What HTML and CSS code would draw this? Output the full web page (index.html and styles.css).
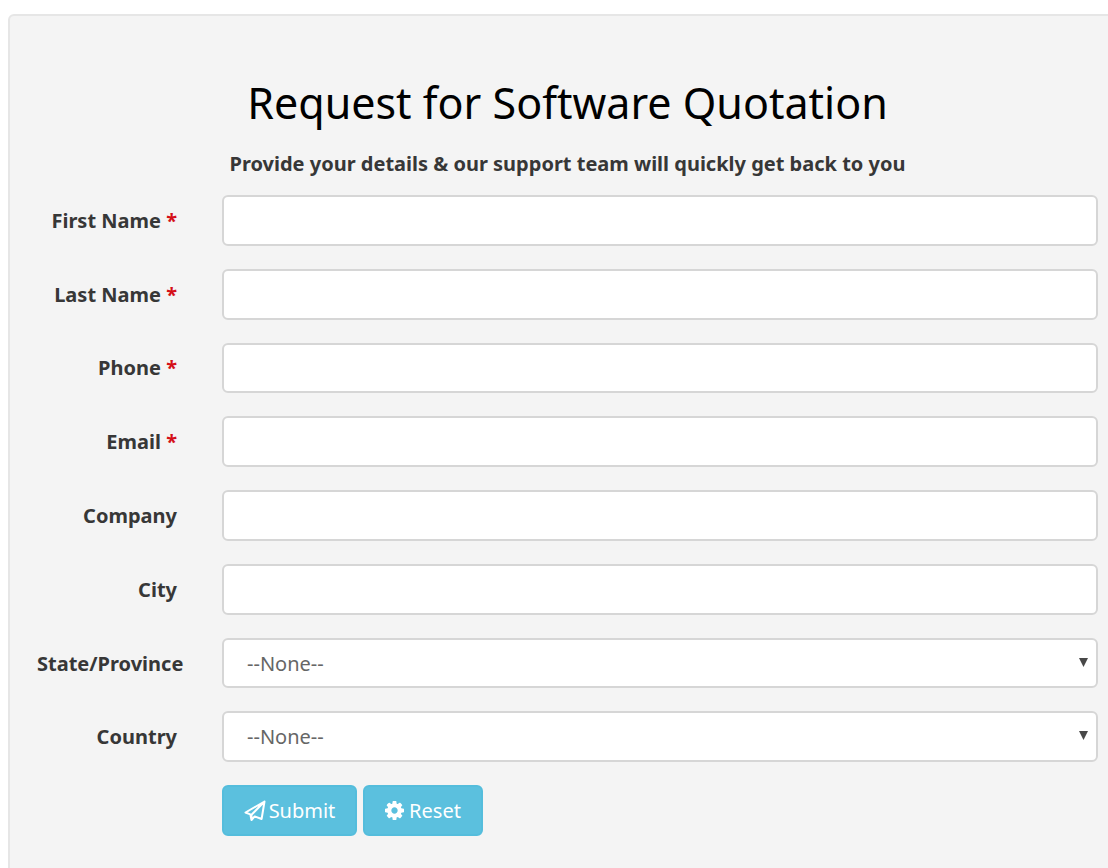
FILE: index.html
```html
<!DOCTYPE html>
<html lang="en">
<head>
<meta charset="utf-8">
<title>Request for Software Quotation</title>
<link rel="stylesheet" href="styles.css">
</head>
<body>
<main class="panel">
  <header class="intro">
    <h1 class="title">Request for Software Quotation</h1>
    <p class="subtitle">Provide your details &amp; our support team will quickly get back to you</p>
  </header>
  <form class="form">
    <div class="row"><label class="label" for="first">First Name <span class="required">*</span></label><input class="field" id="first" type="text" required></div>
    <div class="row"><label class="label" for="last">Last Name <span class="required">*</span></label><input class="field" id="last" type="text" required></div>
    <div class="row"><label class="label" for="phone">Phone <span class="required">*</span></label><input class="field" id="phone" type="tel" required></div>
    <div class="row"><label class="label" for="email">Email <span class="required">*</span></label><input class="field" id="email" type="email" required></div>
    <div class="row"><label class="label" for="company">Company</label><input class="field" id="company" type="text"></div>
    <div class="row"><label class="label" for="city">City</label><input class="field" id="city" type="text"></div>
    <div class="row"><label class="label" for="state">State/Province</label>
      <div class="select"><select class="field" id="state"><option>--None--</option></select><svg class="arrow" viewBox="0 0 9 9" aria-hidden="true"><path d="M0 0H9L4.500 9Z"/></svg></div></div>
    <div class="row"><label class="label" for="country">Country</label>
      <div class="select"><select class="field" id="country"><option>--None--</option></select><svg class="arrow" viewBox="0 0 9 9" aria-hidden="true"><path d="M0 0H9L4.500 9Z"/></svg></div></div>
    <div class="row actions">
      <button class="button submit" type="submit"><svg class="plane" viewBox="0 0 22 22" aria-hidden="true"><path d="M20.500 1.500L1.500 12.500L6.300 14.400L7.500 20L10.700 16.400L17.600 19L20.500 1.500L7.500 14.800V20"/></svg>Submit</button>
      <button class="button reset" type="reset"><svg class="gear" viewBox="0 0 1536 1536" aria-hidden="true"><path d="M1024 768q0-106-75-181t-181-75-181 75-75 181 75 181 181 75 181-75 75-181zm512-109v222q0 12-8 23t-20 13l-185 28q-19 54-39 91 35 50 107 138 10 12 10 25t-9 23q-27 37-99 108t-94 71q-12 0-26-9l-138-108q-44 23-91 38-16 136-29 186-7 28-36 28H657q-14 0-24.500-8.500T621 1506l-28-184q-49-16-90-37l-141 107q-10 9-25 9-14 0-25-11-126-114-165-168-7-10-7-23 0-12 8-23 15-21 51-66.500t54-70.500q-27-50-41-99L29 913q-13-2-21-12.500T0 877V655q0-12 8-23t19-13l186-28q14-46 39-92-40-57-107-138-10-12-10-24 0-10 9-23 26-36 98.500-107.500T337 135q13 0 26 10l138 107q44-23 91-38 16-136 29-186 7-28 36-28h222q14 0 24.500 8.500T915 30l28 184q49 16 90 37l142-107q9-9 24-9 13 0 25 10 129 119 165 170 7 8 7 22 0 12-8 23-15 21-51 66.500t-54 70.500q26 50 41 98l183 28q13 2 21 12.500t8 23.500z"/></svg>Reset</button>
    </div>
  </form>
</main>
</body>
</html>
```
FILE: styles.css
```css
* { box-sizing: border-box; }

body {
  margin: 0;
  overflow-x: hidden;
  background: #fff;
  color: #373737;
  font-family: "Noto Sans", "Open Sans", sans-serif;
  font-size: 20px;
}

.panel {
  min-height: calc(100vh - 14px);
  margin: 14px -20px 0 8px;
  padding: 59px 28px 48px 27px;
  border: 2px solid #e6e6e6;
  border-radius: 6px;
  background: #f4f4f4;
}

.intro { text-align: center; }

.title {
  margin: 0;
  color: #000;
  font-size: 43px;
  font-weight: 400;
  line-height: 56px;
}

.subtitle {
  margin: 18px 0 16px;
  font-weight: 700;
  line-height: 30px;
}

.form {
  display: grid;
  grid-auto-rows: 1fr;
  gap: 23px;
  min-height: 641px;
}

.row {
  display: grid;
  grid-template-columns: 140px minmax(0, 1fr);
  column-gap: 45px;
  align-items: center;
}

.label {
  font-weight: 700;
  text-align: right;
  white-space: nowrap;
}

.required { color: #d40f18; }

.field {
  width: 100%;
  height: 100%;
  padding: 0 23px;
  border: 2px solid #d6d6d6;
  border-radius: 6px;
  background: #fff;
  color: #666;
  font: inherit;
  appearance: none;
}

.select {
  position: relative;
  height: 100%;
}

.arrow {
  position: absolute;
  top: 20px;
  right: 10px;
  width: 9px;
  height: 9px;
  fill: #484848;
  pointer-events: none;
}

.actions {
  display: flex;
  gap: 6px;
  align-items: stretch;
  padding-left: 185px;
}

.button {
  display: flex;
  align-items: center;
  justify-content: center;
  border: 2px solid #54bddc;
  border-radius: 6px;
  background: #5bc0de;
  color: #fff;
  font: inherit;
}

.submit { width: 135px; gap: 3px; }
.reset { width: 120px; gap: 5px; }

.plane {
  width: 22px;
  height: 22px;
  fill: none;
  stroke: #fff;
  stroke-width: 2;
  stroke-linejoin: round;
}

.gear { width: 19px; height: 19px; fill: #fff; }
```
